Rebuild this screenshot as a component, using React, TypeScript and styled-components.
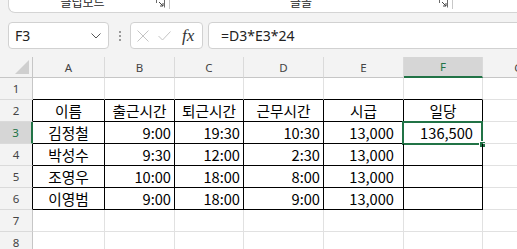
import styled, { createGlobalStyle } from 'styled-components';

type Align = 'left' | 'center' | 'right';

type CellData = {
  text: string;
  align: Align;
  pad?: number;
};

type CellProps = {
  align: Align;
  pad: number;
  rightColor: string;
  bottomColor: string;
};

type HeaderProps = {
  selected: boolean;
};

type RowHeadProps = {
  selected: boolean;
  edgeColor: string;
};

const GREEN = '#217346';
const GRID = '#e1e1e1';

const GlobalStyle = createGlobalStyle`
  * {
    box-sizing: border-box;
  }
  html,
  body {
    margin: 0;
    padding: 0;
    background: #f3f3f3;
    overflow: hidden;
  }
  body {
    font-family: 'Noto Sans CJK KR', 'Noto Sans', sans-serif;
  }
`;

const columns = ['A', 'B', 'C', 'D', 'E', 'F', 'G'];

const c = (text: string): CellData => ({ text, align: 'center' });
const r = (text: string, pad = 3): CellData => ({ text, align: 'right', pad });
const money = (text: string): CellData => r(text, 9);

const sheet: CellData[][] = [
  [],
  [c('이름'), c('출근시간'), c('퇴근시간'), c('근무시간'), c('시급'), c('일당')],
  [c('김정철'), r('9:00'), r('19:30'), r('10:30'), money('13,000'), money('136,500')],
  [c('박성수'), r('9:30'), r('12:00'), r('2:30'), money('13,000'), money('')],
  [c('조영우'), r('10:00'), r('18:00'), r('8:00'), money('13,000'), money('')],
  [c('이영범'), r('9:00'), r('18:00'), r('9:00'), money('13,000'), money('')],
  [],
  [],
];

const inTable = (row: number, col: number) => row >= 2 && row <= 6 && col <= 5;

function Launcher() {
  return (
    <LauncherIcon width="9" height="9" viewBox="0 0 9 9">
      <path d="M0.5 0.5 H8.5 V8.5" fill="none" stroke="#6b6b6b" strokeWidth="1" />
      <path d="M0.5 0.5 V4" fill="none" stroke="#6b6b6b" strokeWidth="1" />
      <path d="M3 3 L7 7 M7 4 V7 H4" fill="none" stroke="#444" strokeWidth="1" />
    </LauncherIcon>
  );
}

export default function App() {
  return (
    <Page>
      <GlobalStyle />
      <Ribbon>
        <RibbonCard>
          <RibbonGroup>
            <GroupLabel width={147}>클립보드</GroupLabel>
            <Launcher />
            <GroupDivider />
          </RibbonGroup>
          <RibbonGroup>
            <GroupLabel width={262}>글꼴</GroupLabel>
            <Spacer />
            <Launcher />
            <GroupDivider />
          </RibbonGroup>
        </RibbonCard>
      </Ribbon>

      <FormulaBar>
        <NameBox>
          <NameText>F3</NameText>
          <svg width="10" height="6" viewBox="0 0 10 6">
            <polyline points="0.5,0.5 5,5 9.5,0.5" fill="none" stroke="#555" strokeWidth="1" />
          </svg>
        </NameBox>
        <Grip>
          <Dot />
          <Dot />
          <Dot />
        </Grip>
        <FxBox>
          <svg width="12" height="12" viewBox="0 0 12 12">
            <path d="M0.5 0.5 L11.5 11.5 M11.5 0.5 L0.5 11.5" stroke="#c4c4c4" strokeWidth="1" />
          </svg>
          <svg width="13" height="10" viewBox="0 0 13 10">
            <polyline points="0.5,5 4.5,9 12.5,0.5" fill="none" stroke="#c4c4c4" strokeWidth="1" />
          </svg>
          <FxLabel>fx</FxLabel>
        </FxBox>
        <FormulaInput>=D3*E3*24</FormulaInput>
      </FormulaBar>

      <Grid>
        <Corner>
          <svg width="14" height="14" viewBox="0 0 14 14">
            <polygon points="14,0 14,14 0,14" fill="#cfcfcf" />
          </svg>
        </Corner>
        {columns.map((col) => (
          <ColHead key={col} selected={col === 'F'}>
            {col}
          </ColHead>
        ))}

        {sheet.map((cells, i) => {
          const row = i + 1;
          const edge = row === 3 ? GREEN : row >= 2 && row <= 6 ? '#000' : '#c6c6c6';
          return [
            <RowHead key={`h${row}`} selected={row === 3} edgeColor={edge}>
              {row}
            </RowHead>,
            ...columns.map((col, ci) => {
              const data = cells[ci];
              const right = inTable(row, ci) ? '#000' : GRID;
              const bottom = inTable(row, ci) || (row === 1 && ci <= 5) ? '#000' : GRID;
              return (
                <Cell
                  key={`${col}${row}`}
                  align={data?.align ?? 'left'}
                  pad={data?.pad ?? 3}
                  rightColor={right}
                  bottomColor={bottom}
                >
                  {data?.text}
                  {col === 'F' && row === 3 && (
                    <Selection>
                      <FillHandle />
                    </Selection>
                  )}
                </Cell>
              );
            }),
          ];
        })}
      </Grid>
    </Page>
  );
}

const Page = styled.div`
  width: 517px;
  height: 249px;
  overflow: hidden;
  background: #f3f3f3;
`;

const Ribbon = styled.div`
  height: 13px;
  padding-left: 8px;
`;

const RibbonCard = styled.div`
  display: flex;
  align-items: flex-end;
  height: 13px;
  background: #fff;
  border-bottom: 1px solid #d4d4d4;
  border-left: 1px solid #d4d4d4;
  border-radius: 0 0 0 7px;
  overflow: hidden;
`;

const RibbonGroup = styled.div`
  display: flex;
  align-items: flex-end;
  height: 100%;
`;

const GroupLabel = styled.div<{ width: number }>`
  width: ${({ width }) => width}px;
  height: 16px;
  margin-bottom: 2px;
  font-size: 12px;
  line-height: 16px;
  color: #262626;
  text-align: center;
`;

const Spacer = styled.div`
  width: 7px;
`;

const LauncherIcon = styled.svg`
  margin-bottom: 4px;
`;

const GroupDivider = styled.div`
  width: 1px;
  height: 10px;
  margin: 0 0 3px 4px;
  background: #c8c8c8;
`;

const FormulaBar = styled.div`
  display: flex;
  align-items: center;
  height: 44px;
  padding: 9px 0 8px 8px;
`;

const BarBox = styled.div`
  display: flex;
  align-items: center;
  height: 27px;
  background: #fff;
  border: 1px solid #d1d1d1;
  border-radius: 4px;
`;

const NameBox = styled(BarBox)`
  justify-content: space-between;
  width: 101px;
  padding: 0 7px 0 6px;
`;

const NameText = styled.span`
  font-family: 'Noto Sans', sans-serif;
  font-size: 14px;
  color: #222;
`;

const Grip = styled.div`
  display: flex;
  flex-direction: column;
  align-items: center;
  gap: 2px;
  width: 21px;
`;

const Dot = styled.span`
  width: 2px;
  height: 2px;
  background: #9a9a9a;
`;

const FxBox = styled(BarBox)`
  width: 73px;
  gap: 9px;
  padding-left: 6px;
`;

const FxLabel = styled.span`
  margin-left: 2px;
  font-family: 'Liberation Serif', serif;
  font-style: italic;
  font-size: 17px;
  color: #333;
`;

const FormulaInput = styled(BarBox)`
  flex: 1;
  margin: 0 -8px 0 5px;
  padding-left: 12px;
  font-family: 'Noto Sans', sans-serif;
  font-size: 14px;
  color: #222;
`;

const Grid = styled.div`
  display: grid;
  grid-template-columns: 33px 72px 70px 69px 80px 80px 79px 72px;
  grid-template-rows: 21px repeat(8, 22px);
  background: #fff;
`;

const HeadBase = styled.div`
  display: flex;
  align-items: center;
  justify-content: center;
  font-family: 'Noto Sans', sans-serif;
  font-size: 11.5px;
  color: #444;
  background: #f3f3f3;
`;

const Corner = styled(HeadBase)`
  justify-content: flex-end;
  align-items: flex-end;
  padding: 0 3px 3px 0;
  border-right: 1px solid #c6c6c6;
  border-bottom: 1px solid #c6c6c6;
`;

const ColHead = styled(HeadBase)<HeaderProps>`
  border-right: 1px solid #dadada;
  border-bottom: ${({ selected }) => (selected ? `2px solid ${GREEN}` : '1px solid #c6c6c6')};
  background: ${({ selected }) => (selected ? '#d6d6d6' : '#f3f3f3')};
  color: ${({ selected }) => (selected ? GREEN : '#444')};
`;

const RowHead = styled(HeadBase)<RowHeadProps>`
  border-right: ${({ selected, edgeColor }) => `${selected ? 2 : 1}px solid ${edgeColor}`};
  border-bottom: 1px solid #dadada;
  background: ${({ selected }) => (selected ? '#d6d6d6' : '#f3f3f3')};
  color: ${({ selected }) => (selected ? GREEN : '#444')};
`;

const Cell = styled.div<CellProps>`
  position: relative;
  display: flex;
  justify-content: ${({ align }) =>
    align === 'center' ? 'center' : align === 'right' ? 'flex-end' : 'flex-start'};
  padding: 0 ${({ pad }) => pad}px;
  font-size: 14.67px;
  line-height: 21px;
  color: #000;
  white-space: nowrap;
  border-right: 1px solid ${({ rightColor }) => rightColor};
  border-bottom: 1px solid ${({ bottomColor }) => bottomColor};
`;

const Selection = styled.div`
  position: absolute;
  top: -1px;
  left: -2px;
  right: -1px;
  bottom: -2px;
  border: 2px solid ${GREEN};
  pointer-events: none;
`;

const FillHandle = styled.div`
  position: absolute;
  right: -5px;
  bottom: -5px;
  width: 7px;
  height: 7px;
  background: ${GREEN};
  border: 1px solid #fff;
`;
